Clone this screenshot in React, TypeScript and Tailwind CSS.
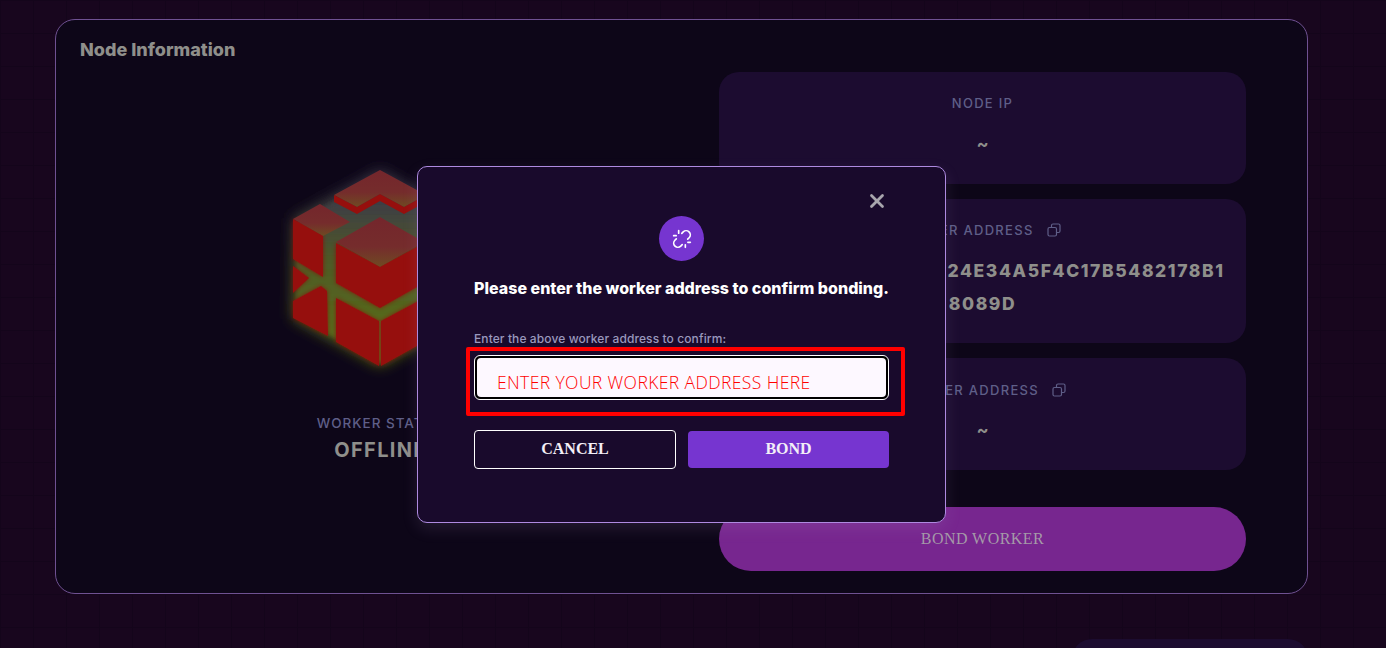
import { X, Unlink } from "lucide-react";

const sans = "font-['Inter','Liberation_Sans',sans-serif]";

function CopyIcon() {
  return (
    <svg width="14" height="14" viewBox="0 0 14 14" fill="none" stroke="#5f5f88" strokeWidth="1.2" className="shrink-0">
      <rect x="1" y="4.5" width="8.5" height="8.5" rx="1.5" />
      <path d="M4.5 4.5V2.5A1.5 1.5 0 0 1 6 1h5.5A1.5 1.5 0 0 1 13 2.5V8a1.5 1.5 0 0 1-1.5 1.5h-2" />
    </svg>
  );
}

function CubeLogo() {
  const red = "#960f0d";
  const redFaces = (
    <>
      <polygon points="292,218 322,235 322,276 292,258" fill={red} />
      <polygon points="292,265 308,277 292,292" fill={red} />
      <polygon points="292,300 320,285 326,290 327,335 292,317" fill={red} />
      <polygon points="335,242 379,266 379,307 335,282" fill={red} />
      <polygon points="423,242 379,266 379,307 423,282" fill={red} />
      <polygon points="335,297 378,320 378,365 335,341" fill={red} />
      <polygon points="423,297 380,320 380,365 423,341" fill={red} />
    </>
  );
  return (
    <svg width="226" height="240" viewBox="267 150 226 240" className="shrink-0">
      <defs>
        <filter id="glow" x="-30%" y="-30%" width="160%" height="160%">
          <feGaussianBlur stdDeviation="7" />
        </filter>
        <filter id="soft" x="-10%" y="-10%" width="120%" height="120%">
          <feGaussianBlur stdDeviation="2" />
        </filter>
        <linearGradient id="under" x1="0" y1="0" x2="0" y2="1">
          <stop offset="0.1" stopColor="#3c3a48" />
          <stop offset="0.45" stopColor="#4f5a26" />
          <stop offset="1" stopColor="#5a7216" />
        </linearGradient>
        <linearGradient id="topFace" x1="0" y1="0" x2="0" y2="1">
          <stop offset="0" stopColor="#74262c" />
          <stop offset="0.6" stopColor="#752c2c" />
          <stop offset="1" stopColor="#6f4a22" />
        </linearGradient>
      </defs>
      {/* glow */}
      <polygon
        points="292,218 379,169 466,218 466,317 379,365 292,317"
        fill="url(#under)"
        filter="url(#glow)"
      />
      <polygon points="296,222 379,176 462,222 462,315 379,362 296,315" fill="url(#under)" filter="url(#soft)" />
      <g filter="url(#soft)" opacity="0.7">
        {redFaces}
      </g>

      {/* top tile */}
      <polygon points="333,194 379,169 425,194 403,206 379,193 356,206" fill="url(#topFace)" />
      <polygon points="333,194 356,206 379,193 379,200 356,213 333,201" fill={red} />
      <polygon points="425,194 403,206 379,193 379,200 403,213 425,201" fill={red} />

      {/* top faces of the two cubes */}
      <polygon points="292,218 319,203 349,221 322,235" fill="url(#topFace)" />
      <polygon points="379,216 335,241 379,266 423,241" fill="url(#topFace)" />
      {redFaces}
    </svg>
  );
}

export default function App() {
  return (
    <div className={`relative h-[648px] overflow-hidden bg-[#18061e] bg-[linear-gradient(#14051b_1px,transparent_1px),linear-gradient(90deg,#14051b_1px,transparent_1px)] bg-[size:33px_33px] pt-[19px] pl-[55px] ${sans}`}>
      {/* Node information card */}
      <div className="w-[1253px] h-[575px] rounded-[20px] border border-[#6f5192] bg-[#0d0618] px-6 pt-[18px]">
        <h2 className="text-[#8f8f8b] text-[18px] leading-6 font-extrabold tracking-[0px]">Node Information</h2>
        <div className="flex mt-[10px]">
          <div className="w-[601px] flex flex-col items-center pt-[79px]">
            <CubeLogo />
            <p className="mt-[24px] text-[#5f5f88] text-[13.5px] leading-4 font-medium tracking-[1px]">WORKER STATUS</p>
            <p className="mt-[7px] text-[#8f8f8b] text-[20px] leading-6 font-bold tracking-[1.3px]">OFFLINE</p>
          </div>
          <div className="ml-[38px] w-[527px] flex flex-col">
            <div className="h-[112px] rounded-[20px] bg-[#1c0c30] flex flex-col items-center pt-6">
              <p className="text-[#5f5f88] text-[13px] leading-4 font-medium tracking-[1.3px] -translate-y-px">NODE IP</p>
              <p className="mt-[20px] text-[#8f8f8b] text-[18px] leading-6 font-bold">~</p>
            </div>
            <div className="mt-[15px] h-[144px] rounded-[20px] bg-[#1c0c30] flex flex-col items-center pt-[23px]">
              <div className="flex items-center gap-[13px] pr-[10px]">
                <p className="text-[#5f5f88] text-[13px] leading-4 font-medium tracking-[1.3px]">WORKER ADDRESS</p>
                <CopyIcon />
              </div>
              <p className="mt-[16px] text-center text-[#8f8f8b] text-[17.5px] leading-[33px] font-extrabold tracking-[1.6px] whitespace-nowrap">
                0xF05A1D7C9E3B6024E34A5F4C17B5482178B1
                <br />
                8089D
              </p>
            </div>
            <div className="mt-[15px] h-[112px] rounded-[20px] bg-[#1c0c30] flex flex-col items-center pt-[24px]">
              <div className="flex items-center gap-[13px] pr-[10px]">
                <p className="text-[#5f5f88] text-[13px] leading-4 font-medium tracking-[1.3px]">PROVIDER ADDRESS</p>
                <CopyIcon />
              </div>
              <p className="mt-[20px] text-[#8f8f8b] text-[18px] leading-6 font-bold">~</p>
            </div>
            <button className="mt-[37px] h-16 rounded-full bg-[#77268f] text-[#a59aa8] text-[16px] tracking-[0.45px] font-['Liberation_Serif',serif]">
              BOND WORKER
            </button>
          </div>
        </div>
      </div>

      {/* next card, cut off by the window */}
      <div className="mt-[45px] ml-[1017px] w-[236px] h-[100px] rounded-[20px] bg-[#1c0c30]" />

      {/* Bond dialog */}
      <div className="absolute left-[417px] top-[166px] w-[529px] h-[357px] rounded-[10px] border border-[#ae8ae0] bg-[#190a2c] px-[56px] shadow-[0_6px_16px_rgba(170,150,200,0.14)]">
        <button className="absolute right-[57px] top-[23px] text-[#a8a6ad]">
          <X size={22} strokeWidth={3} />
        </button>
        <div className="mt-[49px] mx-auto w-[45px] h-[45px] rounded-full bg-[#7635d0] flex items-center justify-center">
          <Unlink size={20} strokeWidth={2} className="text-white" />
        </div>
        <p className="mt-[15px] text-center text-white text-[16px] leading-6 font-extrabold tracking-[0px] whitespace-nowrap">
          Please enter the worker address to confirm bonding.
        </p>
        <p className="mt-[31px] text-[#9a98bd] text-[12px] leading-4 font-medium tracking-[0.1px]">
          Enter the above worker address to confirm:
        </p>
        <div className="mt-[8px] h-[45px] rounded-[6px] border border-white bg-black p-[2px]">
          <div className="h-full rounded-[4px] bg-[#fdf8ff] flex items-center pl-[20px] pt-[9px] text-[#ff0000] text-[17.5px] tracking-[0.4px] font-light font-['Open_Sans',sans-serif]">
            ENTER YOUR WORKER ADDRESS HERE
          </div>
        </div>
        <div className="mt-[30px] flex gap-3">
          <button className="w-[202px] h-[39px] pb-[2px] rounded-[4px] border border-white text-[#f3eff7] text-[16px] font-bold font-['Liberation_Serif',serif]">
            CANCEL
          </button>
          <button className="w-[201px] h-[37px] mt-px pb-[2px] rounded-[4px] bg-[#7635d0] text-[#f3eff7] text-[16px] font-bold font-['Liberation_Serif',serif]">
            BOND
          </button>
        </div>
      </div>

      {/* red annotation around the input */}
      <div className="absolute left-[466px] top-[347px] w-[439px] h-[69px] border-[4px] border-[#ff0000] rounded-[2px]" />
    </div>
  );
}
